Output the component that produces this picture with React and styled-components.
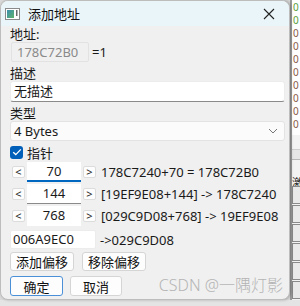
import React from "react";
import styled, { createGlobalStyle } from "styled-components";

const Global = createGlobalStyle`
  html, body { margin: 0; padding: 0; }
  body {
    font-family: "Noto Sans", "Noto Sans CJK SC", sans-serif;
    font-size: 13px;
    color: #1a1a1a;
  }
`;

const offsets = [
  { value: "70", text: "178C7240+70 = 178C72B0", line: "focus" },
  { value: "144", text: "[19EF9E08+144] -> 178C7240", line: "dark" },
  { value: "768", text: "[029C9D08+768] -> 19EF9E08", line: "none" },
];

const digits = ["#5aa03c", "#5aa03c", "#8a5a4a", "#8a5a4a", "#8a5a4a", "#8a5a4a", "#8a5a4a", "#8a5a4a", "#8a5a4a", "#8a5a4a"];

export default function App() {
  return (
    <Screen>
      <Global />
      <Top>
        <Dialog>
          <TitleBar>
            <AppIcon>
              <svg width="15" height="12" viewBox="0 0 15 12">
                <rect x="0.5" y="0.5" width="14" height="11" fill="#fff" stroke="#8a8a8a" />
                <rect x="2" y="2" width="7" height="8" fill="url(#g)" />
                <rect x="11" y="2" width="1.5" height="6" fill="#6a6a6a" />
                <defs>
                  <linearGradient id="g" x1="0" y1="0" x2="1" y2="1">
                    <stop offset="0" stopColor="#3b8fb0" />
                    <stop offset="1" stopColor="#5fb36a" />
                  </linearGradient>
                </defs>
              </svg>
            </AppIcon>
            <Title>添加地址</Title>
            <Close>
              <svg width="12" height="12" viewBox="0 0 12 12">
                <path d="M1 1L11 11M11 1L1 11" stroke="#222" strokeWidth="1.1" />
              </svg>
            </Close>
          </TitleBar>
          <Body>
            <Label $top={0}>地址:</Label>
            <Row $h={20}>
              <ReadOnlyInput>178C72B0</ReadOnlyInput>
              <Plain>=1</Plain>
            </Row>
            <Label $top={3}>描述</Label>
            <TextBox>无描述</TextBox>
            <Label $top={3}>类型</Label>
            <Select>
              <span>4 Bytes</span>
              <svg width="10" height="6" viewBox="0 0 10 6">
                <path d="M1 1L5 5L9 1" fill="none" stroke="#777" strokeWidth="1" />
              </svg>
            </Select>
            <CheckRow>
              <Check>
                <svg width="10" height="8" viewBox="0 0 10 8">
                  <path d="M1.2 4.2L3.8 6.6L8.8 1.4" fill="none" stroke="#fff" strokeWidth="1.3" />
                </svg>
              </Check>
              指针
            </CheckRow>
            {offsets.map((o) => (
              <OffsetRow key={o.value}>
                <Arrow>&lt;</Arrow>
                <OffsetInput $line={o.line}>{o.value}</OffsetInput>
                <Arrow>&gt;</Arrow>
                <Plain>{o.text}</Plain>
              </OffsetRow>
            ))}
            <Row $h={19} $top={4}>
              <BaseInput>006A9EC0</BaseInput>
              <Plain>-&gt;029C9D08</Plain>
            </Row>
            <ButtonRow $top={3}>
              <Button $w={64} $h={19}>添加偏移</Button>
              <Button $w={64} $h={19}>移除偏移</Button>
            </ButtonRow>
            <ButtonRow $top={5} $gap={7}>
              <Button $w={53} $h={20} $primary>确定</Button>
              <Button $w={52} $h={20}>取消</Button>
            </ButtonRow>
          </Body>
          <Watermark>CSDN @一隅灯影</Watermark>
        </Dialog>
        <BackWindow>
          <DigitList>
            {digits.map((c, i) => (
              <Digit key={i} $color={c}>0</Digit>
            ))}
          </DigitList>
          <Band />
          <BackLabel>激</BackLabel>
          <Cells>
            {[0, 1, 2, 3, 4, 5].map((i) => (
              <Cell key={i} />
            ))}
          </Cells>
        </BackWindow>
      </Top>
      <Bottom />
    </Screen>
  );
}

const Screen = styled.div`
  width: 300px;
  height: 306px;
  background: #dadada;
  display: flex;
  flex-direction: column;
  overflow: hidden;
`;

const Top = styled.div`
  display: flex;
  height: 300px;
`;

const Dialog = styled.div`
  position: relative;
  width: 290px;
  height: 300px;
  box-sizing: border-box;
  background: #f0f0f0;
  border: 1px solid #bdbdbd;
  border-radius: 8px;
  overflow: hidden;
  box-shadow: 1px 0 3px rgba(0, 0, 0, 0.25);
  z-index: 1;
`;

const TitleBar = styled.div`
  height: 25px;
  background: #e9f5f8;
  display: flex;
  align-items: center;
  padding-left: 4px;
`;

const AppIcon = styled.div`
  display: flex;
  width: 15px;
  margin-right: 8px;
`;

const Title = styled.div`
  flex: 1;
  font-size: 13px;
  color: #111;
`;

const Close = styled.div`
  width: 34px;
  display: flex;
  justify-content: center;
  margin-right: 3px;
`;

const Body = styled.div`
  display: flex;
  flex-direction: column;
  padding: 0 4px 0 9px;
`;

const Label = styled.div`
  height: 15px;
  line-height: 15px;
  margin-top: ${(p) => p.$top}px;
  padding-top: 1px;
`;

const Row = styled.div`
  display: flex;
  align-items: center;
  height: ${(p) => p.$h}px;
  margin-top: ${(p) => p.$top || 0}px;
`;

const Plain = styled.span`
  margin-left: 3px;
  white-space: nowrap;
`;

const ReadOnlyInput = styled.div`
  width: 78px;
  height: 20px;
  box-sizing: border-box;
  margin-left: 1px;
  border: 1px solid #e2e2e2;
  border-radius: 2px;
  color: #8a8a8a;
  line-height: 18px;
  padding-left: 5px;
`;

const TextBox = styled.div`
  height: 21px;
  box-sizing: border-box;
  background: #fff;
  border: 1px solid #ececec;
  border-bottom: 1px solid #8a8a8a;
  border-radius: 3px;
  line-height: 19px;
  padding-left: 3px;
`;

const Select = styled.div`
  height: 20px;
  box-sizing: border-box;
  background: #fbfbfb;
  border: 1px solid #e3e3e3;
  border-radius: 3px;
  display: flex;
  align-items: center;
  justify-content: space-between;
  padding: 0 6px 0 3px;
`;

const CheckRow = styled.div`
  display: flex;
  align-items: center;
  height: 16px;
  margin-top: 3px;
  gap: 4px;
`;

const Check = styled.div`
  width: 13px;
  height: 13px;
  border-radius: 3px;
  background: #005fb8;
  display: flex;
  align-items: center;
  justify-content: center;
`;

const OffsetRow = styled.div`
  display: flex;
  align-items: center;
  height: 20px;
  margin-top: 2px;
`;

const Arrow = styled.div`
  width: 13px;
  height: 12px;
  margin: 0 2px 0 2px;
  background: #fdfdfd;
  border: 1px solid #dcdcdc;
  border-radius: 2px;
  box-sizing: border-box;
  font-size: 11px;
  line-height: 9px;
  text-align: center;
  color: #222;
`;

const OffsetInput = styled.div`
  width: 54px;
  height: 20px;
  box-sizing: border-box;
  background: #fff;
  text-align: center;
  line-height: 19px;
  border-bottom: ${(p) =>
    p.$line === "focus" ? "2px solid #0067c0" : p.$line === "dark" ? "1px solid #8a8a8a" : "1px solid #fff"};
`;

const BaseInput = styled.div`
  width: 86px;
  height: 19px;
  box-sizing: border-box;
  background: #fff;
  border: 1px solid #ececec;
  border-radius: 2px;
  line-height: 17px;
  padding-left: 2px;
  margin-right: 1px;
`;

const ButtonRow = styled.div`
  display: flex;
  gap: ${(p) => p.$gap || 8}px;
  margin-top: ${(p) => p.$top}px;
`;

const Button = styled.div`
  width: ${(p) => p.$w}px;
  height: ${(p) => p.$h}px;
  box-sizing: border-box;
  background: #fdfdfd;
  border: 1px solid ${(p) => (p.$primary ? "#4a90d9" : "#d5d5d5")};
  border-radius: 3px;
  display: flex;
  align-items: center;
  justify-content: center;
  color: #111;
`;

const Watermark = styled.div`
  position: absolute;
  right: 6px;
  bottom: 3px;
  font-family: "Noto Sans", "Noto Sans CJK SC", sans-serif;
  font-size: 16px;
  font-weight: 300;
  color: #b4b4b4;
  white-space: nowrap;
`;

const BackWindow = styled.div`
  flex: 1;
  background: #f3f3f3;
  border-left: 2px solid #9a9a9a;
  display: flex;
  flex-direction: column;
  overflow: hidden;
`;

const DigitList = styled.div`
  display: flex;
  flex-direction: column;
  padding: 1px 0 4px 1px;
  background: #fff;
`;

const Digit = styled.div`
  height: 13px;
  line-height: 13px;
  font-size: 10px;
  overflow: hidden;
  color: ${(p) => p.$color};
`;

const Band = styled.div`
  margin-top: 14px;
  height: 12px;
  background: #e6e6e6;
  border-top: 1px solid #cfcfcf;
  border-bottom: 1px solid #b8b8b8;
`;

const BackLabel = styled.div`
  margin-top: 16px;
  font-size: 11px;
  line-height: 14px;
  height: 14px;
  overflow: hidden;
  color: #222;
`;

const Cells = styled.div`
  display: flex;
  flex-direction: column;
`;

const Cell = styled.div`
  height: 16px;
  border: 1px solid #8a8a8a;
  border-right: none;
  margin-bottom: 1px;
  background: #e9e9e9;
`;

const Bottom = styled.div`
  height: 6px;
  background: #e4e4e4;
`;
